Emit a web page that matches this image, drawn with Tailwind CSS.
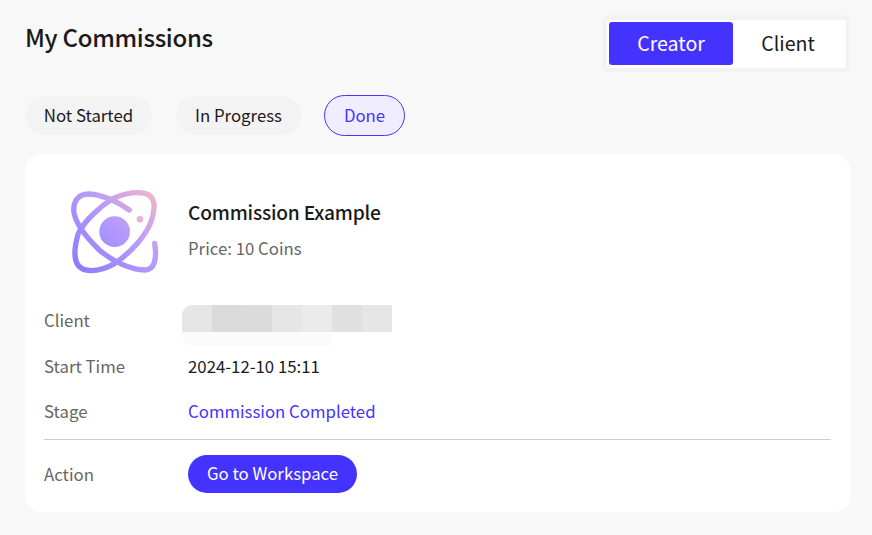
<!DOCTYPE html>
<html lang="en">
<head>
    <meta charset="UTF-8">
    <title>My Commissions</title>
    <script src="https://cdn.jsdelivr.net/npm/@tailwindcss/browser@4"></script>
</head>
<body class="bg-[#f8f8f8] h-[535px] overflow-hidden font-['Noto_Sans_CJK_SC','Noto_Sans',sans-serif] text-[#1a1a1a]">
    <div class="pl-[25px] pr-[22px] pt-[15px]">
        <header class="flex justify-between items-start h-[57px]">
            <h1 class="text-[24px] leading-[46px] -mt-[1px] font-medium tracking-[-0.3px]">My Commissions</h1>
            <div class="bg-[#f3f3f3] rounded-md pl-[5px] pr-[4px] pt-[5px] pb-[4px]">
                <div class="bg-white rounded flex p-[2px] pb-[3px] w-[239px] h-[48px] text-[19.6px]">
                    <button class="w-[124px] bg-[#4433ff] text-white rounded-[3px] pb-[1px]">Creator</button>
                    <button class="w-[110px] pb-[1px]">Client</button>
                </div>
            </div>
        </header>
        <nav class="flex items-center gap-[24px] mt-[23px] text-[16.8px]">
            <button class="w-[127px] h-[39px] rounded-full bg-[#f3f3f3] pt-[1px]">Not Started</button>
            <button class="w-[125px] h-[39px] rounded-full bg-[#f3f3f3] pt-[1px]">In Progress</button>
            <button class="w-[81px] h-[41px] rounded-full bg-[#efedff] border border-[#4433ff] text-[#4433ff] -ml-[1px]">Done</button>
        </nav>
    </div>
    <section class="ml-[25px] mt-[18px] w-[825px] h-[358px] bg-white rounded-[16px] px-[19px]">
        <div class="flex items-start h-[143px] pt-[16px]">
            <svg class="w-[130px] h-[120px] ml-[6px] mr-[8px] shrink-0" viewBox="0 0 390 360" fill="none">
                <defs>
                    <linearGradient id="logo-grad" x1="70" y1="300" x2="320" y2="60" gradientUnits="userSpaceOnUse">
                        <stop offset="0" stop-color="#8a7bff"/>
                        <stop offset="0.55" stop-color="#b59bfb"/>
                        <stop offset="1" stop-color="#f5b8c4"/>
                    </linearGradient>
                </defs>
                <path d="M238 120 C200 92 150 72 115 72 C82 72 68 98 72 128 C78 165 112 205 148 240 C188 275 245 300 285 300 C312 300 322 270 314 220" stroke="url(#logo-grad)" stroke-width="16" stroke-linecap="round"/>
                <path d="M190 85 C225 70 260 65 285 70 C315 78 318 110 305 150 C290 195 245 245 195 280 C165 297 130 306 103 299 C72 288 68 248 85 190 C105 150 150 110 190 85 Z" stroke="url(#logo-grad)" stroke-width="16"/>
                <circle cx="194" cy="185" r="46" fill="url(#logo-grad)"/>
                <circle cx="270" cy="148" r="10" fill="#e6b6d4"/>
            </svg>
            <div class="pt-[28px]">
                <h2 class="text-[19.2px] leading-[28px] font-medium tracking-[-0.2px]">Commission Example</h2>
                <p class="text-[16.8px] leading-[24px] mt-[10px] text-[#666666]">Price: 10 Coins</p>
            </div>
        </div>
        <dl class="grid grid-cols-[144px_1fr] text-[16.8px] items-center">
            <dt class="h-[46px] leading-[46px] text-[#666666]">Client</dt>
            <dd class="h-[46px]">
                <div class="flex relative w-[210px] h-[41px] mt-[8px] -ml-[6px] overflow-hidden rounded-l-[10px]" aria-hidden="true">
                    <div class="w-[30px] bg-[#e6e6e6] h-[27px]"></div>
                    <div class="w-[30px] bg-[#dadada] h-[27px]"></div>
                    <div class="w-[30px] bg-[#dbdbdb] h-[27px]"></div>
                    <div class="w-[30px] bg-[#e6e6e6] h-[27px]"></div>
                    <div class="w-[30px] bg-[#ebebeb] h-[27px]"></div>
                    <div class="w-[30px] bg-[#e0e0e0] h-[27px]"></div>
                    <div class="w-[30px] bg-[#e6e6e6] h-[27px]"></div>
                    <div class="absolute left-0 top-[27px] w-[150px] h-[14px] bg-[#fbfbfb]"></div>
                </div>
            </dd>
            <dt class="h-[46px] leading-[46px] text-[#666666]">Start Time</dt>
            <dd class="h-[46px] leading-[46px]">2024-12-10 15:11</dd>
            <dt class="h-[50px] leading-[44px] text-[#666666]">Stage</dt>
            <dd class="h-[50px] leading-[44px] text-[#4433ff]">Commission Completed</dd>
        </dl>
        <div class="border-t border-[#cfcfcf] grid grid-cols-[144px_1fr] items-center h-[72px] pb-[4px] text-[16.8px]">
            <span class="text-[#666666] pt-[2px]">Action</span>
            <button class="w-[169px] h-[38px] rounded-full bg-[#4433ff] text-white pt-[1px]">Go to Workspace</button>
        </div>
    </section>
</body>
</html>
